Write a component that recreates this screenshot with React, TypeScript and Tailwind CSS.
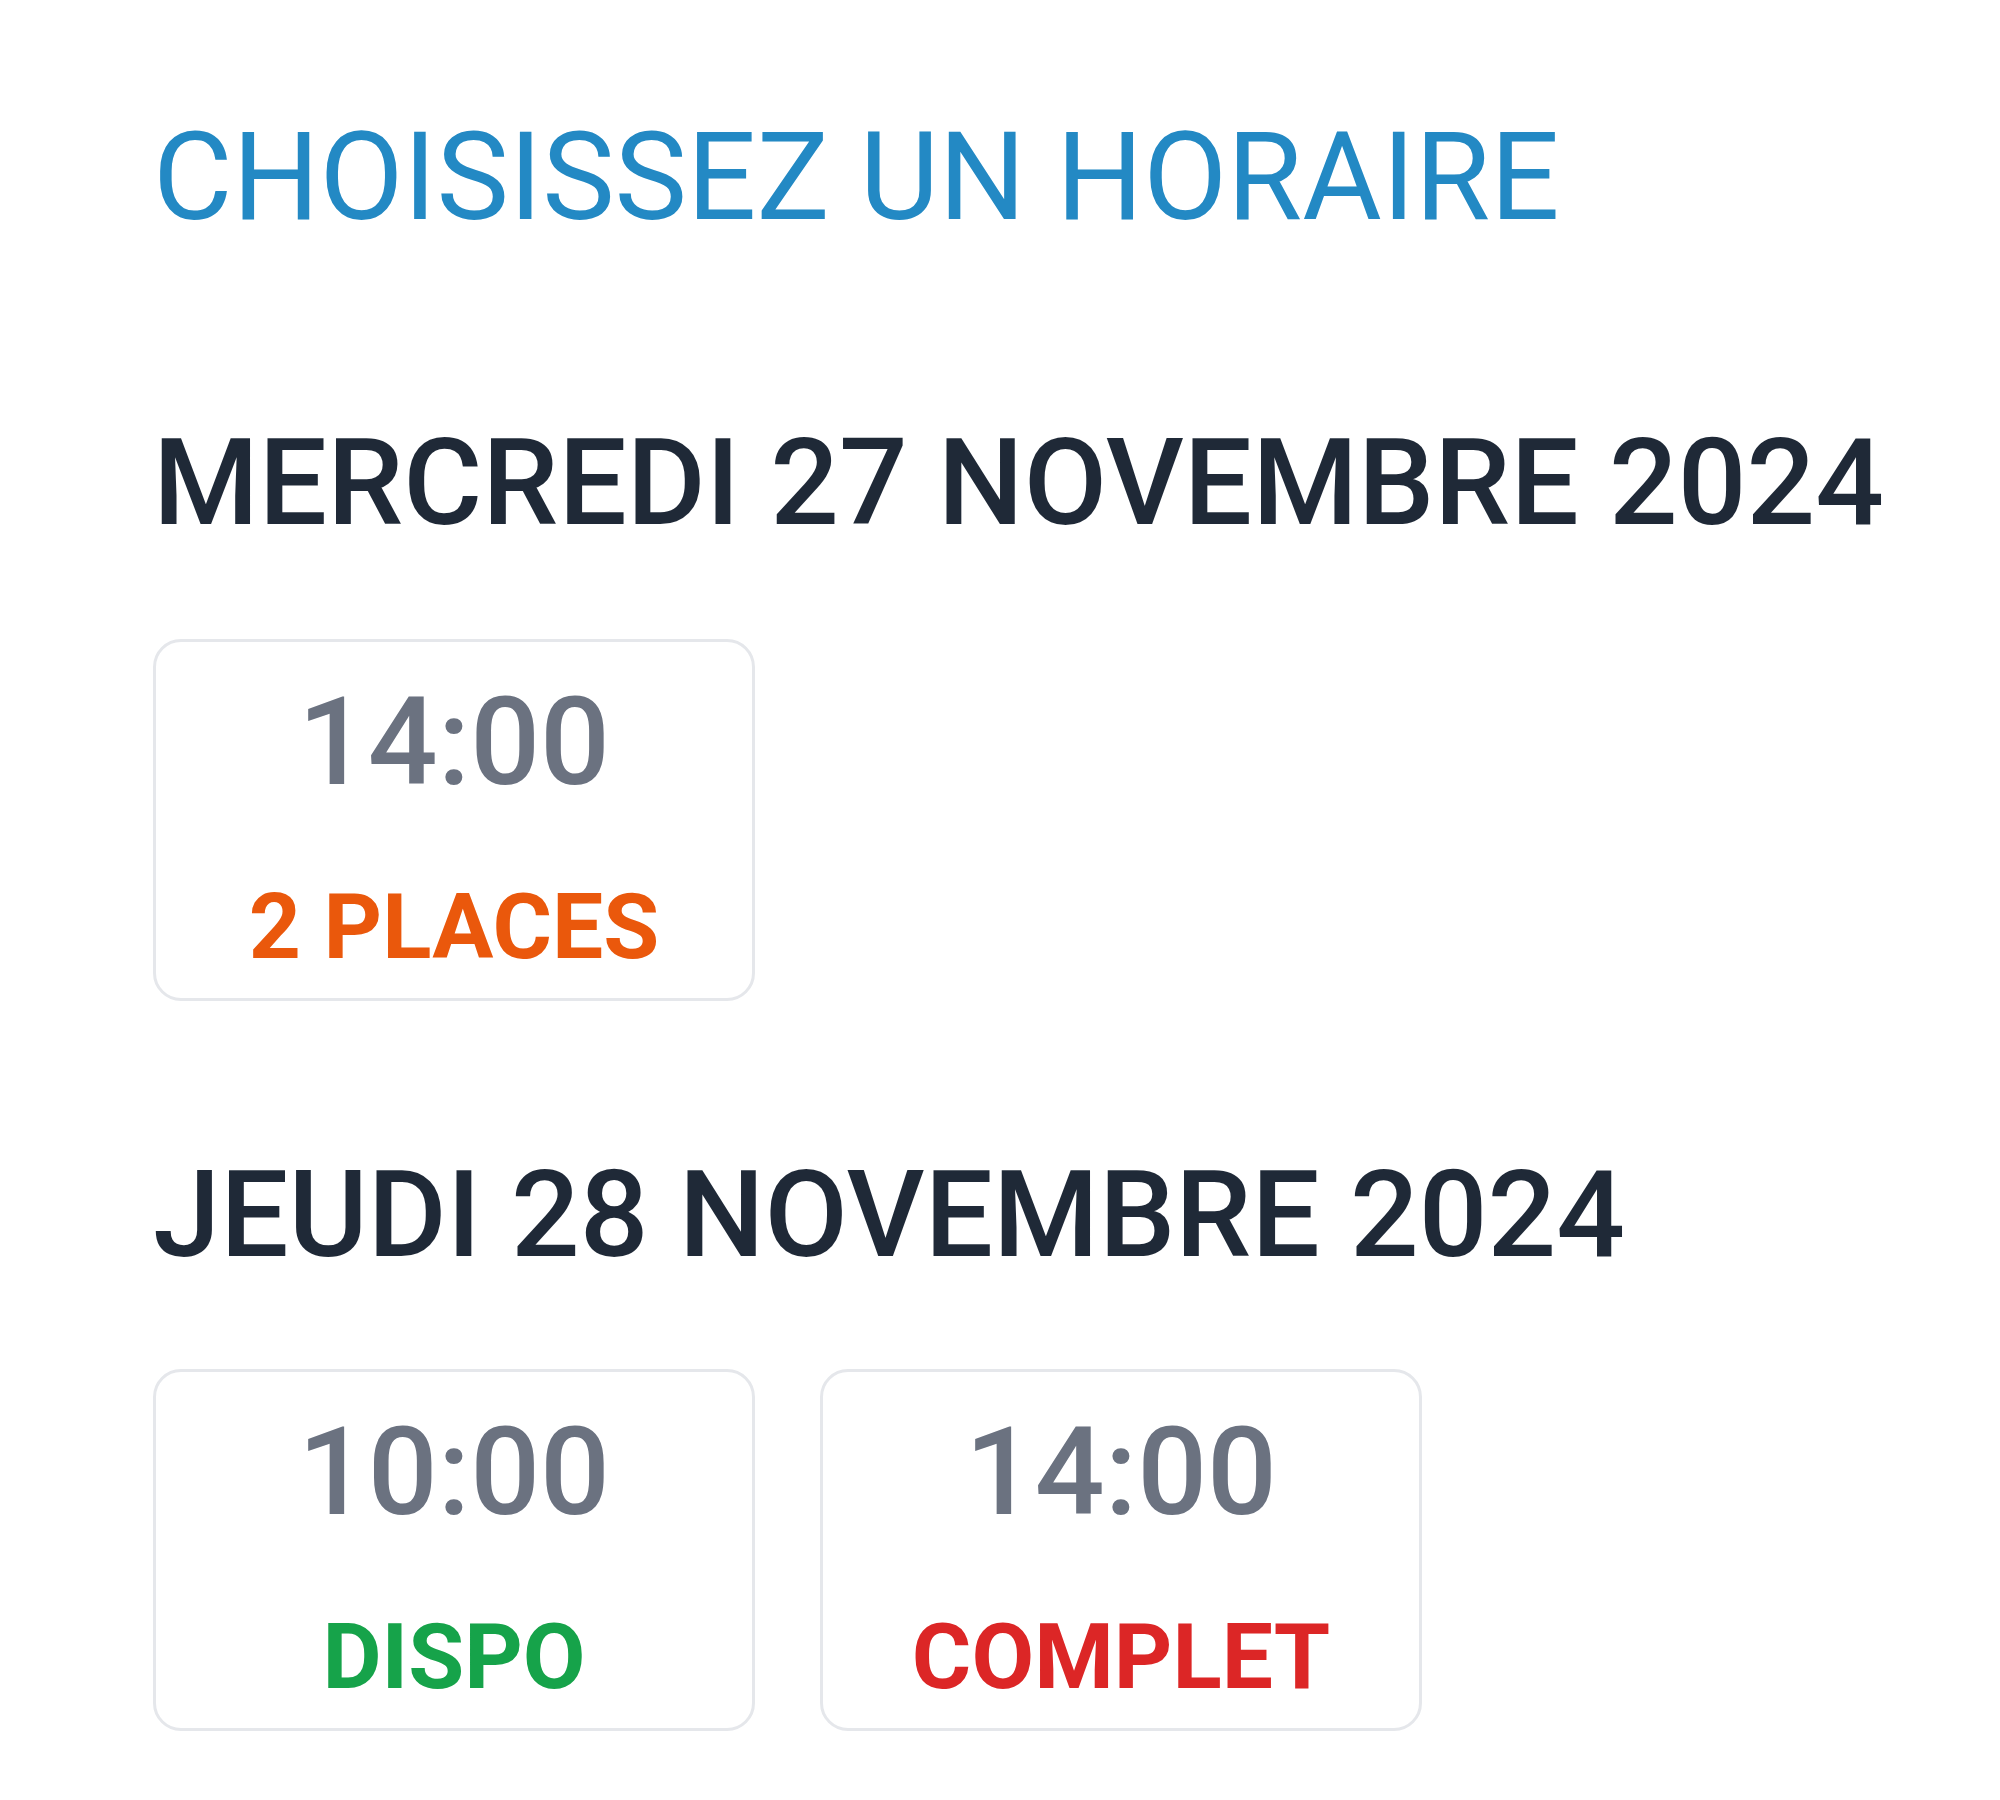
import React from "react";

type Slot = { time: string; label: string; color: string };

const days: { title: string; slots: Slot[] }[] = [
  {
    title: "MERCREDI 27 NOVEMBRE 2024",
    slots: [{ time: "14:00", label: "2 PLACES", color: "text-[#ea580c]" }],
  },
  {
    title: "JEUDI 28 NOVEMBRE 2024",
    slots: [
      { time: "10:00", label: "DISPO", color: "text-[#16a34a]" },
      { time: "14:00", label: "COMPLET", color: "text-[#dc2626]" },
    ],
  },
];

function Card({ slot }: { slot: Slot }) {
  return (
    <div className="w-[602px] h-[362px] border-[3px] border-[#e5e7eb] rounded-[28px] bg-white flex flex-col items-center pt-[28px]">
      <div className="text-[123px] leading-[144px] font-medium text-[#6b7280]">{slot.time}</div>
      <div className={`mt-[56px] text-[91px] leading-[115px] font-bold ${slot.color}`}>{slot.label}</div>
    </div>
  );
}

export default function App() {
  return (
    <div
      className="min-h-screen bg-white pl-[153px] pt-[106px]"
      style={{ fontFamily: "Roboto, 'Liberation Sans', sans-serif" }}
    >
      <h1 className="text-[122px] leading-[144px] font-normal text-[#2389c4]">CHOISISSEZ UN HORAIRE</h1>
      <section className="mt-[161px]">
        <h2 className="text-[121px] leading-[144px] font-medium text-[#1f2937] mb-[84px]">{days[0].title}</h2>
        <div className="flex gap-[65px]">
          {days[0].slots.map((s, i) => (
            <Card key={i} slot={s} />
          ))}
        </div>
      </section>
      <section className="mt-[142px]">
        <h2 className="text-[121px] leading-[144px] font-medium text-[#1f2937] mb-[82px]">{days[1].title}</h2>
        <div className="flex gap-[65px]">
          {days[1].slots.map((s, i) => (
            <Card key={i} slot={s} />
          ))}
        </div>
      </section>
    </div>
  );
}
